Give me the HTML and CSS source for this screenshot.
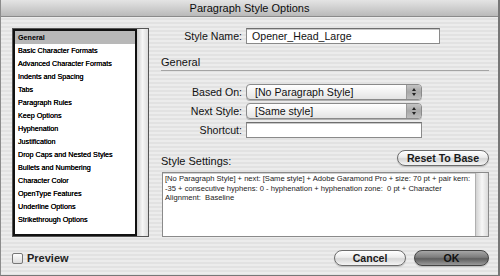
FILE: index.html
```html
<!DOCTYPE html>
<html lang="en">
<head>
  <meta charset="UTF-8">
  <title>Paragraph Style Options</title>
  <link rel="stylesheet" href="styles.css">
</head>
<body>
  <div class="window">
    <div class="titlebar">Paragraph Style Options</div>

    <div class="main">
      <div class="list">
        <ul class="items">
          <li class="selected">General</li>
          <li>Basic Character Formats</li>
          <li>Advanced Character Formats</li>
          <li>Indents and Spacing</li>
          <li>Tabs</li>
          <li>Paragraph Rules</li>
          <li>Keep Options</li>
          <li>Hyphenation</li>
          <li>Justification</li>
          <li>Drop Caps and Nested Styles</li>
          <li>Bullets and Numbering</li>
          <li>Character Color</li>
          <li>OpenType Features</li>
          <li>Underline Options</li>
          <li>Strikethrough Options</li>
        </ul>
        <div class="track"></div>
      </div>

      <div class="panel">
        <div class="form">
          <label class="lbl">Style Name:</label>
          <div class="field name">Opener_Head_Large</div>
        </div>

        <h2 class="section">General</h2>

        <div class="form general">
          <label class="lbl">Based On:</label>
          <div class="popup"><span>[No Paragraph Style]</span><i class="arrows"></i></div>
          <label class="lbl">Next Style:</label>
          <div class="popup"><span>[Same style]</span><i class="arrows"></i></div>
          <label class="lbl">Shortcut:</label>
          <div class="field short"></div>
        </div>

        <div class="settings-head">
          <span class="settings-lbl">Style Settings:</span>
          <button class="btn reset">Reset To Base</button>
        </div>
        <div class="settings">
          <p class="settings-text">[No Paragraph Style] + next: [Same style] + Adobe Garamond Pro + size: 70 pt + pair kern:<br>-35 + consecutive hyphens: 0 - hyphenation + hyphenation zone:&nbsp; 0 pt + Character<br>Alignment:&nbsp; Baseline</p>
          <div class="vscroll"></div>
        </div>
      </div>
    </div>

    <div class="footer">
      <label class="preview"><span class="check"></span>Preview</label>
      <div class="actions">
        <button class="btn cancel">Cancel</button>
        <button class="btn ok">OK</button>
      </div>
    </div>
  </div>
</body>
</html>
```

FILE: styles.css
```css
*, *::before, *::after {
  box-sizing: border-box;
}
* {
  margin: 0;
  padding: 0;
}
body {
  width: 500px;
  height: 276px;
  overflow: hidden;
  font-family: "Liberation Sans", Arial, sans-serif;
  color: #111;
  background: #9a9a9a;
}

.window {
  width: 500px;
  height: 276px;
  border-left: 1px solid #8c8c8c;
  border-right: 2px solid #777;
  border-bottom: 1px solid #777;
  background: repeating-linear-gradient(#ececec 0 2px, #e2e2e2 2px 4px);
  display: flex;
  flex-direction: column;
}

.titlebar {
  height: 17px;
  border-bottom: 1px solid #8a8a8a;
  background: linear-gradient(#e4e4e4, #cfcfcf 50%, #b9b9b9);
  text-align: center;
  font-size: 11px;
  line-height: 16px;
  color: #0c0c0c;
}

.main {
  display: flex;
  gap: 12px;
  padding: 11px 9px 0 11px;
  height: 220px;
}

/* category list */
.list {
  flex: 0 0 137px;
  height: 209px;
  display: flex;
  border: 1px solid #555;
  background: #fff;
}
.items {
  list-style: none;
  flex: 1;
  border: 2px solid #111;
  background: #fff;
}
.items li {
  height: 13px;
  line-height: 13px;
  padding-left: 3px;
  font-size: 7.2px;
  color: #000;
  text-shadow: 0 0 0.4px #000;
  white-space: nowrap;
}
.items li.selected {
  background: #b8b8b8;
  font-weight: bold;
  text-shadow: none;
}
.track {
  width: 11px;
  background: linear-gradient(to right, #cfcfcf, #f6f6f6 50%, #dcdcdc);
}

/* right side */
.panel {
  flex: 1;
  min-width: 0;
  display: flex;
  flex-direction: column;
}
.form {
  display: grid;
  grid-template-columns: 81px auto;
  column-gap: 4px;
  align-items: center;
  justify-items: start;
}
.lbl {
  justify-self: end;
  font-size: 10.6px;
  color: #111;
}
.field {
  height: 16px;
  background: #fff;
  border: 1px solid #8a8a8a;
  border-top-color: #6e6e6e;
  box-shadow: inset 0 1px 0 #c8c8c8;
  font-size: 10.6px;
  line-height: 14px;
  padding-left: 5px;
}
.field.name {
  width: 194px;
}
.field.short {
  width: 176px;
}

.section {
  margin-top: 12px;
  font-size: 11px;
  font-weight: normal;
  line-height: 13px;
  padding-bottom: 1px;
  border-bottom: 1px solid #a4a4a4;
}

.general {
  margin-top: 13px;
  row-gap: 3px;
}
.popup {
  width: 176px;
  height: 16px;
  display: flex;
  border: 1px solid #8a8a8a;
  border-radius: 4px;
  background: linear-gradient(#ffffff, #f2f2f2 50%, #e4e4e4);
  box-shadow: 0 1px 0 #b0b0b0;
  overflow: hidden;
}
.popup span {
  flex: 1;
  font-size: 10.6px;
  line-height: 14px;
  padding-left: 8px;
}
.arrows {
  width: 15px;
  position: relative;
  border-left: 1px solid #9a9a9a;
  background: linear-gradient(#c4c4c4, #a8a8a8 50%, #bdbdbd);
}
.arrows::before,
.arrows::after {
  content: "";
  position: absolute;
  left: 5px;
  border-left: 2.5px solid transparent;
  border-right: 2.5px solid transparent;
}
.arrows::before {
  top: 3px;
  border-bottom: 3px solid #222;
}
.arrows::after {
  bottom: 3px;
  border-top: 3px solid #222;
}

/* settings */
.settings-head {
  margin-top: 12px;
  display: flex;
  justify-content: space-between;
  align-items: flex-end;
}
.settings-lbl {
  font-size: 11px;
  line-height: 12px;
  margin-bottom: -1px;
}
.settings {
  margin-top: 6px;
  margin-left: 1px;
  height: 70px;
  display: flex;
  background: #fff;
  border: 1px solid #8a8a8a;
  box-shadow: inset 0 1px 0 #cfcfcf;
}
.settings-text {
  flex: 1;
  min-width: 0;
  font-size: 7.6px;
  line-height: 9.5px;
  padding: 1px 1px 0 2px;
  color: #1a1a1a;
  white-space: nowrap;
  overflow: hidden;
}
.vscroll {
  flex: 0 0 13px;
  border-left: 1px solid #b0b0b0;
  background: linear-gradient(to right, #d2d2d2, #f7f7f7 50%, #dadada);
}

/* buttons */
.btn {
  font-family: "Liberation Sans", Arial, sans-serif;
  font-size: 10.6px;
  font-weight: bold;
  height: 16px;
  line-height: 14px;
  border: 1px solid #6c6c6c;
  border-radius: 8px;
  color: #1a1a1a;
  background: linear-gradient(#ffffff, #ececec 45%, #d6d6d6 55%, #f4f4f4);
  box-shadow: 0 1px 1px #bdbdbd;
}
.btn.reset {
  width: 92px;
}

.footer {
  display: flex;
  justify-content: space-between;
  align-items: center;
  padding: 0 9px 0 11px;
  margin-top: 13px;
}
.preview {
  display: flex;
  align-items: center;
  gap: 4px;
  font-size: 11px;
  font-weight: bold;
  color: #222;
}
.check {
  width: 11px;
  height: 11px;
  border: 1px solid #777;
  border-radius: 2px;
  background: linear-gradient(#fdfdfd, #dcdcdc);
}
.actions {
  display: flex;
  gap: 8px;
}
.btn.cancel {
  width: 72px;
}
.btn.ok {
  width: 75px;
  border-color: #444;
  background: linear-gradient(#a6a6a6, #7c7c7c 45%, #5e5e5e 55%, #9a9a9a);
  color: #111;
}
```
